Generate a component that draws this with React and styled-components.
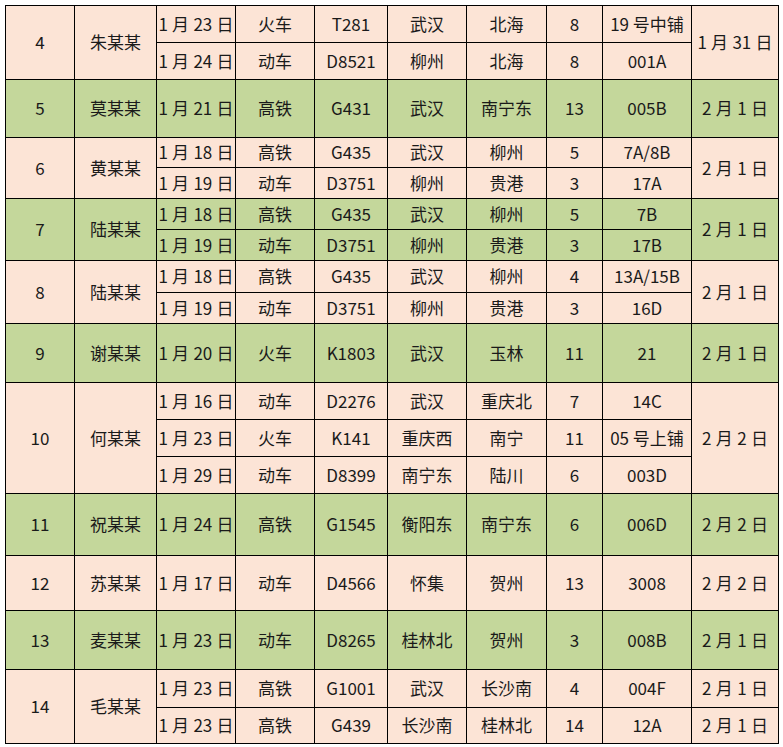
import React from 'react';
import styled, { createGlobalStyle } from 'styled-components';

const GlobalStyle = createGlobalStyle`
  html, body {
    margin: 0;
    padding: 0;
    background: #fff;
  }
  body {
    font-family: "Noto Sans CJK SC", "Noto Sans", sans-serif;
  }
`;

const PEACH = '#fce4d6';
const GREEN = '#c4d79b';

const Page = styled.div`
  padding: 5px 0 0 5px;
`;

const Table = styled.table`
  border-collapse: collapse;
  table-layout: fixed;
  width: 773px;
  color: #1a1a1a;
  font-size: 17px;
`;

const Cell = styled.td`
  border: 1px solid #000;
  background: ${p => (p.$green ? GREEN : PEACH)};
  text-align: center;
  vertical-align: middle;
  white-space: nowrap;
  overflow: visible;
  padding: 0 0 2px;
  line-height: 1;
`;

const DateCell = styled(Cell)`
  word-spacing: 0.5px;
`;

const widths = [69, 82, 79, 79, 73, 79, 80, 56, 89, 87];

const groups = [
  {
    id: 4, name: '朱某某', due: '1 月 31 日',
    trips: [
      { h: 37, date: '1 月 23 日', type: '火车', no: 'T281', from: '武汉', to: '北海', car: '8', seat: '19 号中铺' },
      { h: 37, date: '1 月 24 日', type: '动车', no: 'D8521', from: '柳州', to: '北海', car: '8', seat: '001A' },
    ],
  },
  {
    id: 5, name: '莫某某', due: '2 月 1 日', green: true,
    trips: [
      { h: 58, date: '1 月 21 日', type: '高铁', no: 'G431', from: '武汉', to: '南宁东', car: '13', seat: '005B' },
    ],
  },
  {
    id: 6, name: '黄某某', due: '2 月 1 日',
    trips: [
      { h: 30, date: '1 月 18 日', type: '高铁', no: 'G435', from: '武汉', to: '柳州', car: '5', seat: '7A/8B' },
      { h: 31, date: '1 月 19 日', type: '动车', no: 'D3751', from: '柳州', to: '贵港', car: '3', seat: '17A' },
    ],
  },
  {
    id: 7, name: '陆某某', due: '2 月 1 日', green: true,
    trips: [
      { h: 31, date: '1 月 18 日', type: '高铁', no: 'G435', from: '武汉', to: '柳州', car: '5', seat: '7B' },
      { h: 31, date: '1 月 19 日', type: '动车', no: 'D3751', from: '柳州', to: '贵港', car: '3', seat: '17B' },
    ],
  },
  {
    id: 8, name: '陆某某', due: '2 月 1 日',
    trips: [
      { h: 32, date: '1 月 18 日', type: '高铁', no: 'G435', from: '武汉', to: '柳州', car: '4', seat: '13A/15B' },
      { h: 31, date: '1 月 19 日', type: '动车', no: 'D3751', from: '柳州', to: '贵港', car: '3', seat: '16D' },
    ],
  },
  {
    id: 9, name: '谢某某', due: '2 月 1 日', green: true,
    trips: [
      { h: 59, date: '1 月 20 日', type: '火车', no: 'K1803', from: '武汉', to: '玉林', car: '11', seat: '21' },
    ],
  },
  {
    id: 10, name: '何某某', due: '2 月 2 日',
    trips: [
      { h: 37, date: '1 月 16 日', type: '动车', no: 'D2276', from: '武汉', to: '重庆北', car: '7', seat: '14C' },
      { h: 37, date: '1 月 23 日', type: '火车', no: 'K141', from: '重庆西', to: '南宁', car: '11', seat: '05 号上铺' },
      { h: 37, date: '1 月 29 日', type: '动车', no: 'D8399', from: '南宁东', to: '陆川', car: '6', seat: '003D' },
    ],
  },
  {
    id: 11, name: '祝某某', due: '2 月 2 日', green: true,
    trips: [
      { h: 62, date: '1 月 24 日', type: '高铁', no: 'G1545', from: '衡阳东', to: '南宁东', car: '6', seat: '006D' },
    ],
  },
  {
    id: 12, name: '苏某某', due: '2 月 2 日',
    trips: [
      { h: 55, date: '1 月 17 日', type: '动车', no: 'D4566', from: '怀集', to: '贺州', car: '13', seat: '3008' },
    ],
  },
  {
    id: 13, name: '麦某某', due: '2 月 1 日', green: true,
    trips: [
      { h: 59, date: '1 月 23 日', type: '动车', no: 'D8265', from: '桂林北', to: '贺州', car: '3', seat: '008B' },
    ],
  },
  {
    id: 14, name: '毛某某', split: true,
    trips: [
      { h: 38, date: '1 月 23 日', type: '高铁', no: 'G1001', from: '武汉', to: '长沙南', car: '4', seat: '004F', due: '2 月 1 日' },
      { h: 36, date: '1 月 23 日', type: '高铁', no: 'G439', from: '长沙南', to: '桂林北', car: '14', seat: '12A', due: '2 月 1 日' },
    ],
  },
];

const GroupRows = ({ group }) => {
  const span = group.trips.length;
  const g = group.green;
  return group.trips.map((t, i) => (
    <tr key={group.id + '-' + i} style={{ height: t.h }}>
      {i === 0 && <Cell $green={g} rowSpan={span}>{group.id}</Cell>}
      {i === 0 && <Cell $green={g} rowSpan={span}>{group.name}</Cell>}
      <DateCell $green={g}>{t.date}</DateCell>
      <Cell $green={g}>{t.type}</Cell>
      <Cell $green={g}>{t.no}</Cell>
      <Cell $green={g}>{t.from}</Cell>
      <Cell $green={g}>{t.to}</Cell>
      <Cell $green={g}>{t.car}</Cell>
      <Cell $green={g}>{t.seat}</Cell>
      {group.split
        ? <DateCell $green={g}>{t.due}</DateCell>
        : i === 0 && <DateCell $green={g} rowSpan={span}>{group.due}</DateCell>}
    </tr>
  ));
};

const App = () => (
  <Page>
    <GlobalStyle />
    <Table>
      <colgroup>
        {widths.map((w, i) => <col key={i} style={{ width: w }} />)}
      </colgroup>
      <tbody>
        {groups.map(g => <GroupRows key={g.id} group={g} />)}
      </tbody>
    </Table>
  </Page>
);

export default App;
